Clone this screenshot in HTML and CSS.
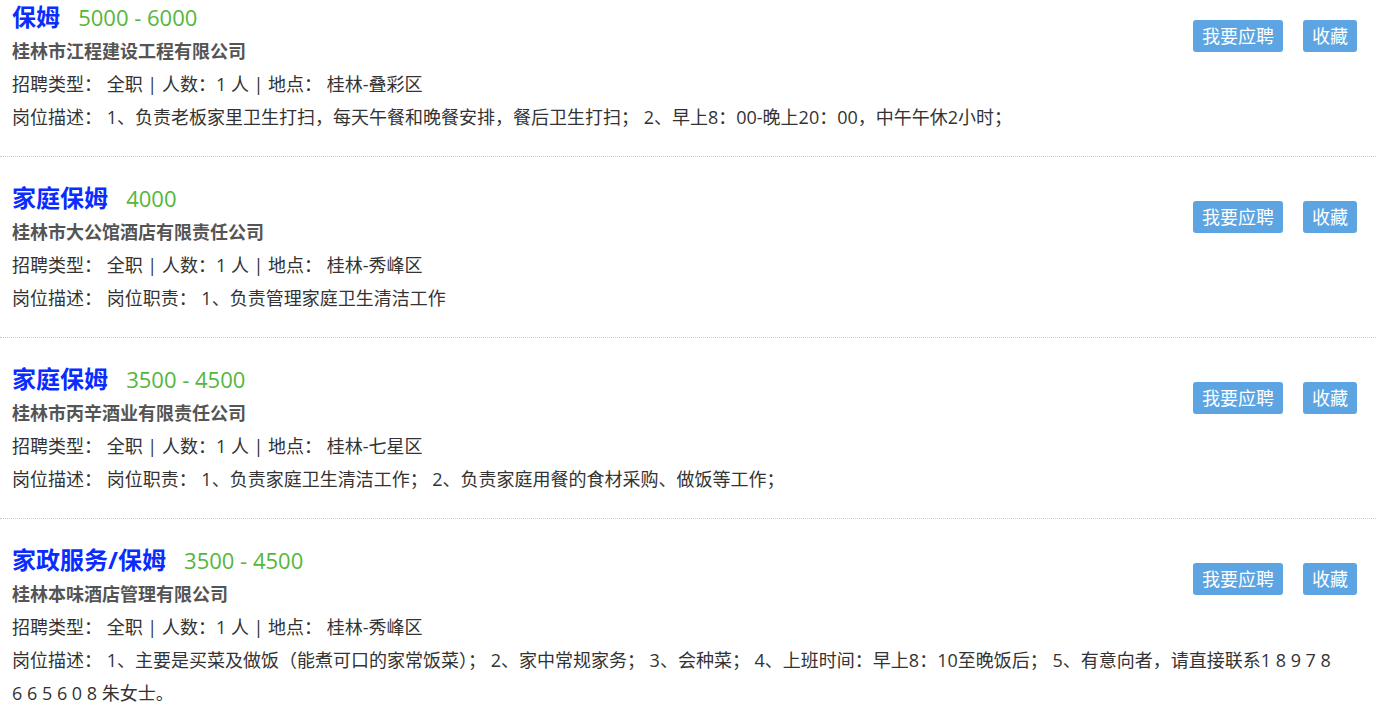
FILE: index.html
```html
<!DOCTYPE html>
<html lang="zh-CN">
<head>
    <meta charset="UTF-8">
    <meta name="viewport" content="width=device-width, initial-scale=1.0">
    <title>招聘信息</title>
    <link rel="stylesheet" href="styles.css">
</head>
<body>
    <ul class="job-list">
        <!-- 保姆 -->
        <li class="job-item">
            <div class="job-actions">
                <a class="btn" href="#">我要应聘</a>
                <a class="btn" href="#">收藏</a>
            </div>
            <div class="job-head">
                <a class="job-title" href="#">保姆</a>
                <span class="job-salary">5000 - 6000</span>
            </div>
            <div class="job-company">桂林市江程建设工程有限公司</div>
            <div class="job-row">招聘类型： 全职 | 人数：1 人 | 地点： 桂林-叠彩区</div>
            <div class="job-row">岗位描述： 1、负责老板家里卫生打扫，每天午餐和晚餐安排，餐后卫生打扫； 2、早上8：00-晚上20：00，中午午休2小时；</div>
        </li>

        <!-- 家庭保姆 -->
        <li class="job-item">
            <div class="job-actions">
                <a class="btn" href="#">我要应聘</a>
                <a class="btn" href="#">收藏</a>
            </div>
            <div class="job-head">
                <a class="job-title" href="#">家庭保姆</a>
                <span class="job-salary">4000</span>
            </div>
            <div class="job-company">桂林市大公馆酒店有限责任公司</div>
            <div class="job-row">招聘类型： 全职 | 人数：1 人 | 地点： 桂林-秀峰区</div>
            <div class="job-row">岗位描述： 岗位职责： 1、负责管理家庭卫生清洁工作</div>
        </li>

        <!-- 家庭保姆 -->
        <li class="job-item">
            <div class="job-actions">
                <a class="btn" href="#">我要应聘</a>
                <a class="btn" href="#">收藏</a>
            </div>
            <div class="job-head">
                <a class="job-title" href="#">家庭保姆</a>
                <span class="job-salary">3500 - 4500</span>
            </div>
            <div class="job-company">桂林市丙辛酒业有限责任公司</div>
            <div class="job-row">招聘类型： 全职 | 人数：1 人 | 地点： 桂林-七星区</div>
            <div class="job-row">岗位描述： 岗位职责： 1、负责家庭卫生清洁工作； 2、负责家庭用餐的食材采购、做饭等工作；</div>
        </li>

        <!-- 家政服务/保姆 -->
        <li class="job-item">
            <div class="job-actions">
                <a class="btn" href="#">我要应聘</a>
                <a class="btn" href="#">收藏</a>
            </div>
            <div class="job-head">
                <a class="job-title" href="#">家政服务/保姆</a>
                <span class="job-salary">3500 - 4500</span>
            </div>
            <div class="job-company">桂林本味酒店管理有限公司</div>
            <div class="job-row">招聘类型： 全职 | 人数：1 人 | 地点： 桂林-秀峰区</div>
            <div class="job-row">岗位描述： 1、主要是买菜及做饭（能煮可口的家常饭菜）； 2、家中常规家务； 3、会种菜； 4、上班时间：早上8：10至晚饭后； 5、有意向者，请直接联系1 8 9 7 8 6 6 5 6 0 8 朱女士。</div>
        </li>
    </ul>
</body>
</html>
```

FILE: styles.css
```css
body {
    font-family: "Open Sans", "Noto Sans CJK SC", sans-serif;
    background-color: #fff;
    color: #333;
    margin: 0;
    padding: 0;
}
.job-list {
    list-style: none;
    margin: -24px 0 0 0;
    padding: 0;
}
.job-item {
    padding: 23px 19px 22px 12px;
    border-bottom: 1px dotted #c8c8c8;
}
.job-actions {
    float: right;
    display: flex;
    gap: 20px;
    margin-top: 21px;
}
.btn {
    display: block;
    height: 32px;
    line-height: 32px;
    padding: 0 9px;
    background-color: #5ca5e2;
    color: #fff;
    font-size: 18px;
    text-decoration: none;
    border-radius: 3px;
}
.job-head {
    height: 36px;
    line-height: 36px;
}
.job-title {
    color: #0a2cff;
    font-size: 24px;
    font-weight: bold;
    text-decoration: none;
}
.job-salary {
    color: #55b63c;
    font-size: 22px;
    margin-left: 14px;
}
.job-company {
    color: #555;
    font-size: 18px;
    font-weight: bold;
    line-height: 33px;
}
.job-row {
    font-size: 18px;
    line-height: 33px;
    margin-right: 14px;
}
```
